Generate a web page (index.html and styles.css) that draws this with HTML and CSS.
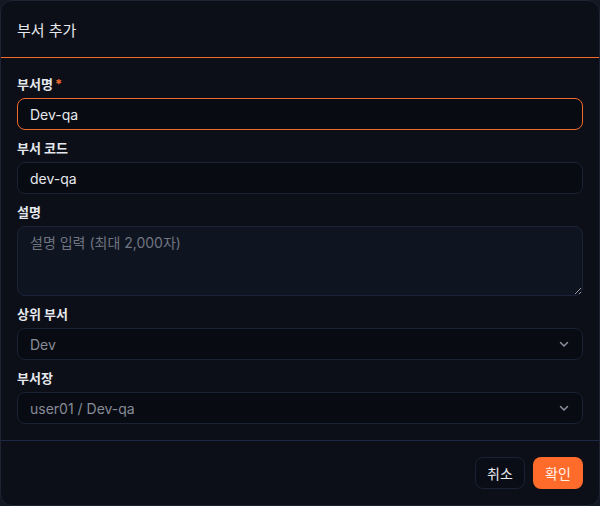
FILE: index.html
```html
<!DOCTYPE html>
<html lang="ko">
<head>
<meta charset="utf-8">
<link rel="stylesheet" href="styles.css">
</head>
<body>
<div class="dialog">
  <div class="header">부서 추가</div>
  <div class="body">
    <div class="field">
      <label class="label">부서명<span class="req">*</span></label>
      <div class="input focus">Dev-qa</div>
    </div>
    <div class="field">
      <label class="label">부서 코드</label>
      <div class="input">dev-qa</div>
    </div>
    <div class="field">
      <label class="label">설명</label>
      <textarea class="textarea" placeholder="설명 입력 (최대 2,000자)"></textarea>
    </div>
    <div class="field">
      <label class="label">상위 부서</label>
      <div class="input select"><span>Dev</span>
        <svg class="chev" width="12" height="12" viewBox="0 0 12 12"><path d="M2.5 4.5 6 8l3.5-3.5" fill="none" stroke="#8b909c" stroke-width="1.5" stroke-linecap="round" stroke-linejoin="round"/></svg>
      </div>
    </div>
    <div class="field">
      <label class="label">부서장</label>
      <div class="input select"><span>user01 / Dev-qa</span>
        <svg class="chev" width="12" height="12" viewBox="0 0 12 12"><path d="M2.5 4.5 6 8l3.5-3.5" fill="none" stroke="#8b909c" stroke-width="1.5" stroke-linecap="round" stroke-linejoin="round"/></svg>
      </div>
    </div>
  </div>
  <div class="footer">
    <button class="btn cancel">취소</button>
    <button class="btn ok">확인</button>
  </div>
</div>
</body>
</html>
```
FILE: styles.css
```css
* { box-sizing: border-box; }
html, body { margin: 0; padding: 0; }
body {
  background: #141823;
  font-family: Inter, "Noto Sans CJK KR", sans-serif;
  width: 600px;
  height: 506px;
}
.dialog {
  width: 600px;
  height: 506px;
  background: #0c0f17;
  border: 1px solid #1e2332;
  border-radius: 12px;
  display: flex;
  flex-direction: column;
  overflow: hidden;
}
.header {
  height: 57px;
  padding: 0 16px;
  display: flex;
  align-items: center;
  font-size: 15px;
  color: #e6e8ee;
  border-bottom: 1px solid #f26a2b;
  flex: none;
}
.body {
  padding: 16px 16px 16px;
  display: flex;
  flex-direction: column;
  gap: 8px;
  border-bottom: 1px solid #1f2746;
  flex: none;
}
.field {
  display: flex;
  flex-direction: column;
  gap: 4px;
}
.label {
  font-size: 13px;
  font-weight: 700;
  line-height: 20px;
  height: 20px;
  color: #e6e8ee;
}
.req {
  color: #f26a2b;
  margin-left: 2px;
}
.input {
  height: 32px;
  border: 1px solid #1b2236;
  border-radius: 8px;
  background: #080b12;
  padding: 0 12px;
  display: flex;
  align-items: center;
  font-size: 14px;
  color: #e6e8ee;
}
.input.focus {
  border-color: #f26a2b;
}
.select {
  color: #878c98;
  justify-content: space-between;
}
.chev { margin-right: 0; }
.textarea {
  display: block;
  width: 100%;
  height: 70px;
  border: 1px solid #1c2439;
  border-radius: 8px;
  background: #0f1421;
  padding: 6px 12px;
  font-family: Inter, "Noto Sans CJK KR", sans-serif;
  font-size: 14px;
  color: #e6e8ee;
  line-height: 20px;
  outline: none;
  resize: vertical;
  color-scheme: dark;
}
.textarea::placeholder { color: #6f7480; }
.footer {
  flex: 1;
  display: flex;
  justify-content: flex-end;
  align-items: flex-start;
  padding: 16px 16px 0;
  gap: 8px;
}
.btn {
  height: 32px;
  width: 50px;
  border-radius: 8px;
  font-family: Inter, "Noto Sans CJK KR", sans-serif;
  font-size: 14px;
  cursor: pointer;
}
.cancel {
  background: #0a0d15;
  border: 1px solid #1c2236;
  color: #e6e8ee;
}
.ok {
  background: #ff6b2b;
  border: none;
  color: #fff1e8;
}
```
